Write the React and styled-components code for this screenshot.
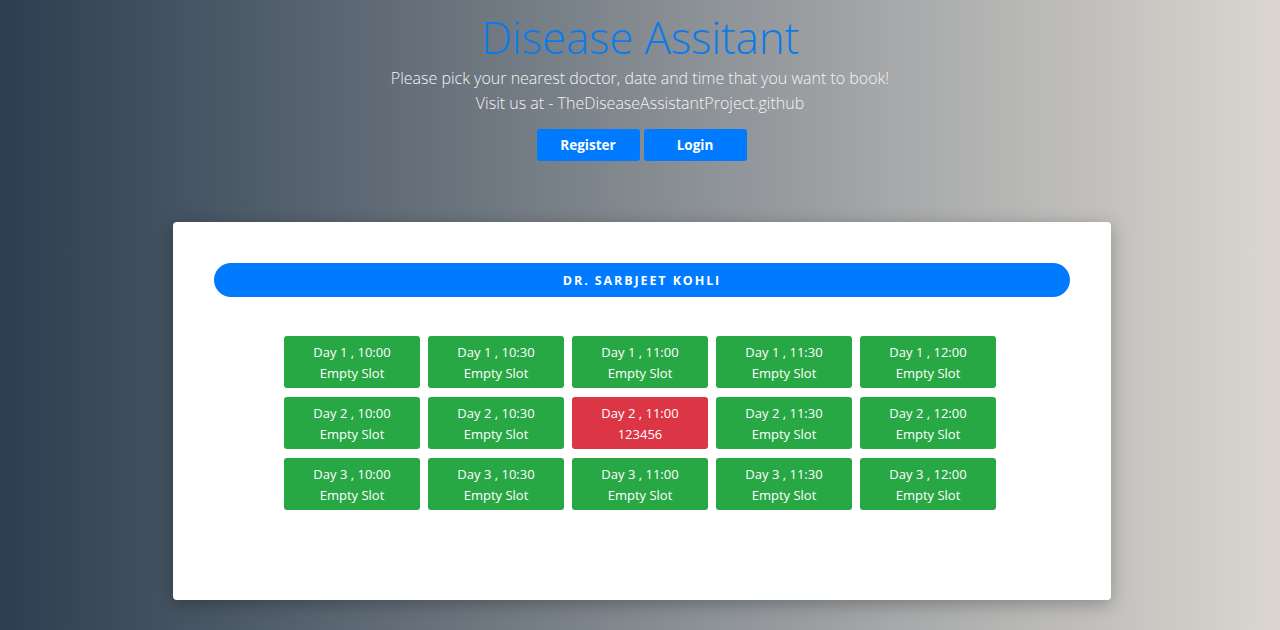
import React from 'react';
import styled, { createGlobalStyle } from 'styled-components';

const GlobalStyle = createGlobalStyle`
  html, body {
    margin: 0;
    padding: 0;
    height: 100%;
  }
  body {
    font-family: "Open Sans", "Noto Sans", sans-serif;
    background: linear-gradient(to right, #2c3e50, #dbd6d0);
    min-height: 630px;
    overflow: hidden;
  }
`;

const Page = styled.div`
  display: flex;
  flex-direction: column;
  align-items: center;
  min-height: 630px;
`;

const Header = styled.header`
  display: flex;
  flex-direction: column;
  align-items: center;
  padding-top: 8px;
`;

const Title = styled.h1`
  margin: 0;
  font-size: 44px;
  font-weight: 300;
  line-height: 58px;
  color: #0a7bea;
  letter-spacing: -0.2px;
`;

const Subtitle = styled.p`
  margin: 0;
  font-size: 16px;
  font-weight: 300;
  line-height: 25px;
  color: #f4f4f4;
`;

const Actions = styled.div`
  display: flex;
  gap: 4px;
  margin-top: 13px;
  margin-left: 3px;
`;

const Button = styled.button`
  width: 103px;
  height: 32px;
  border: none;
  border-radius: 3px;
  background: #007bff;
  color: #fff;
  font-family: "Open Sans", sans-serif;
  font-size: 13.5px;
  font-weight: 700;
  cursor: pointer;
`;

const Card = styled.section`
  width: 938px;
  height: 378px;
  box-sizing: border-box;
  margin-top: 61px;
  margin-left: 4px;
  padding: 41px 41px 0;
  background: #fff;
  border-radius: 4px;
  box-shadow: 0 4px 18px rgba(0, 0, 0, 0.28);
  display: flex;
  flex-direction: column;
  align-items: center;
`;

const DoctorPill = styled.div`
  align-self: stretch;
  height: 34px;
  display: flex;
  align-items: center;
  justify-content: center;
  background: #007bff;
  border-radius: 17px;
  color: #fff;
  font-size: 12.5px;
  font-weight: 700;
  letter-spacing: 1.9px;
  text-transform: uppercase;
`;

const SlotGrid = styled.div`
  display: grid;
  grid-template-columns: repeat(5, 136px);
  column-gap: 8px;
  row-gap: 9px;
  margin-top: 39px;
  margin-left: -4px;
`;

const Slot = styled.div`
  box-sizing: border-box;
  height: 52px;
  display: flex;
  flex-direction: column;
  align-items: center;
  justify-content: center;
  border-radius: 3px;
  background: ${(p) => (p.$booked ? '#dc3545' : '#28a745')};
  color: #fff;
  font-size: 13px;
  line-height: 20.5px;
  padding-top: 1px;
`;

const times = ['10:00', '10:30', '11:00', '11:30', '12:00'];
const booked = { '2-11:00': '123456' };

export default function App() {
  const slots = [];
  [1, 2, 3].forEach((day) => {
    times.forEach((t) => {
      const who = booked[`${day}-${t}`];
      slots.push({ key: `${day}-${t}`, day, t, who });
    });
  });

  return (
    <>
      <GlobalStyle />
      <Page>
        <Header>
          <Title>Disease Assitant</Title>
          <Subtitle>Please pick your nearest doctor, date and time that you want to book!</Subtitle>
          <Subtitle>Visit us at - TheDiseaseAssistantProject.github</Subtitle>
          <Actions>
            <Button>Register</Button>
            <Button>Login</Button>
          </Actions>
        </Header>
        <Card>
          <DoctorPill>Dr. Sarbjeet Kohli</DoctorPill>
          <SlotGrid>
            {slots.map((s) => (
              <Slot key={s.key} $booked={!!s.who}>
                <span>Day {s.day} , {s.t}</span>
                <span>{s.who || 'Empty Slot'}</span>
              </Slot>
            ))}
          </SlotGrid>
        </Card>
      </Page>
    </>
  );
}
